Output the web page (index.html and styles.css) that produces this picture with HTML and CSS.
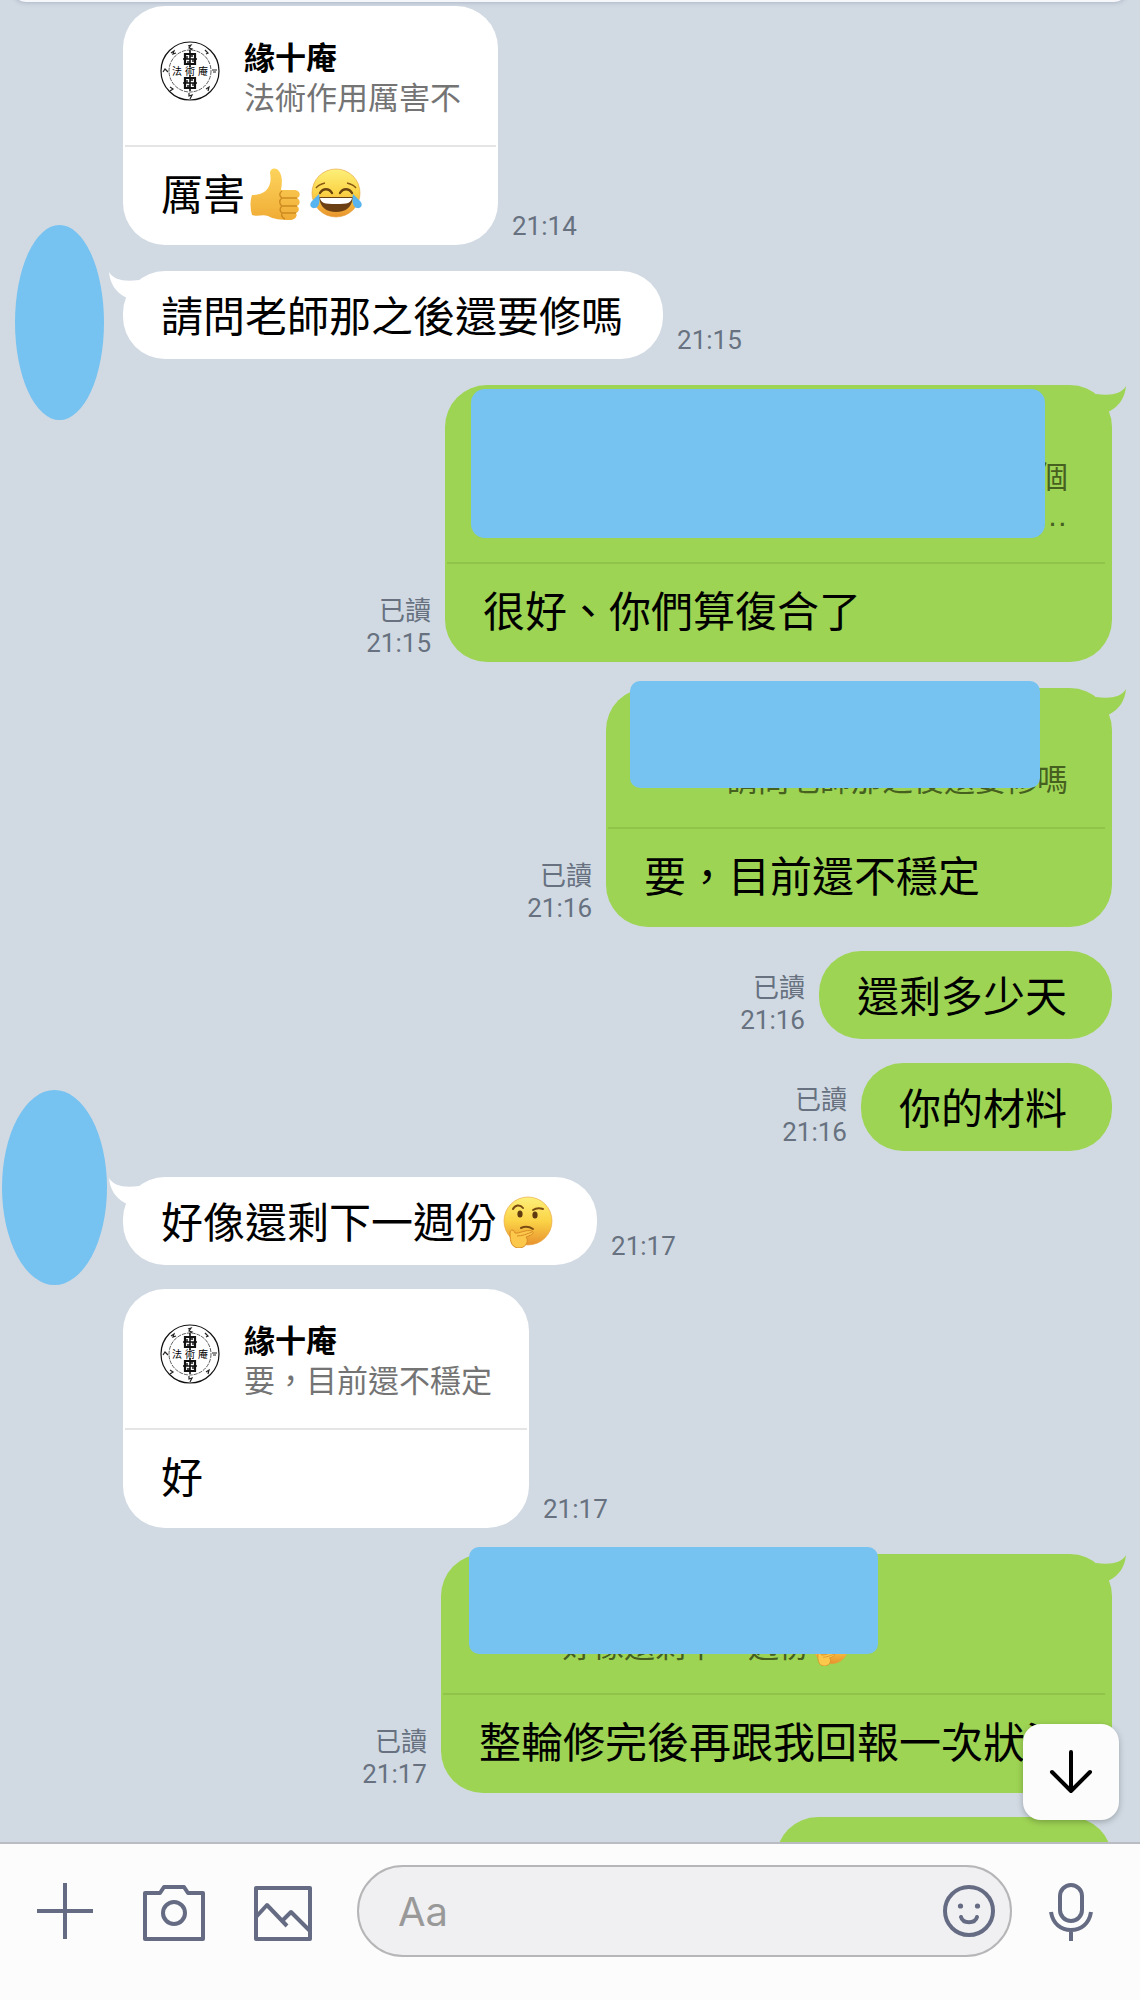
FILE: index.html
```html
<!DOCTYPE html>
<html lang="zh-Hant">
<head>
  <meta charset="UTF-8">
  <meta name="viewport" content="width=device-width, initial-scale=1.0">
  <title>緣十庵</title>
  <link rel="stylesheet" href="styles.css">
</head>
<body>
  <!-- shared drawings -->
  <svg class="defs" aria-hidden="true">
    <defs>
      <linearGradient id="face" x1="0" y1="0" x2="0" y2="1">
        <stop offset="0" stop-color="#fdf07a"/>
        <stop offset="0.5" stop-color="#fbd347"/>
        <stop offset="1" stop-color="#e8922e"/>
      </linearGradient>
      <linearGradient id="hand" x1="0" y1="0" x2="0" y2="1">
        <stop offset="0" stop-color="#fdd45c"/>
        <stop offset="1" stop-color="#f0ac35"/>
      </linearGradient>
    </defs>

    <symbol id="thumb" viewBox="0 0 52 52">
      <path d="M2 27C9 27 15 25 18 20C21 15 21 10 20 5C20 0 26-1 29 3C33 9 32 16 31 22H44C51 22 51 29 47 30C51 32 50 37 47 38C50 40 49 44 46 45C48 48 45 52 40 52C31 52 23 51 18 48C12 46 8 49 2 47C0 40 0 33 2 27Z" fill="url(#hand)"/>
      <path d="M32 30H47M32 38H47M32 45H46M32 23C29 25 29 28 32 30C29 32 29 36 32 38C29 40 30 44 32 45C31 47 32 50 35 51" fill="none" stroke="#cd8a21" stroke-width="1.4"/>
    </symbol>

    <symbol id="joy" viewBox="0 0 52 52">
      <circle cx="26" cy="25" r="24" fill="url(#face)" stroke="#e5a03a" stroke-width="0.6"/>
      <path d="M6 20C8 17 11 16 15 15M46 20C44 17 41 16 37 15" fill="none" stroke="#8a5a14" stroke-width="1.4"/>
      <path d="M10 25C13 20 19 20 22 25M30 25C33 20 39 20 42 25" fill="none" stroke="#6b4410" stroke-width="2.4" stroke-linecap="round"/>
      <path d="M9 29H43C42 39 36 44 26 44S10 39 9 29Z" fill="#6b3f12"/>
      <path d="M10 30H42C41 35 38 36 26 36S11 35 10 30Z" fill="#fff"/>
      <path d="M9 26C10 31 10 39 5 40C0 41-1 36 2 33Z" fill="#58b4ee"/>
      <path d="M43 26C42 31 42 39 47 40C52 41 53 36 50 33Z" fill="#58b4ee"/>
    </symbol>

    <symbol id="thinking" viewBox="0 0 52 52">
      <circle cx="26" cy="25" r="24" fill="url(#face)" stroke="#e5a03a" stroke-width="0.6"/>
      <path d="M11 13C13 9 18 8 21 12M31 14C34 12 38 12 41 13" fill="none" stroke="#7a4c12" stroke-width="2" stroke-linecap="round"/>
      <ellipse cx="18" cy="18" rx="2.6" ry="3.6" fill="#5f3a10"/>
      <ellipse cx="33" cy="19" rx="2.6" ry="3.6" fill="#5f3a10"/>
      <path d="M19 32C23 30 28 31 31 33" fill="none" stroke="#7a4c12" stroke-width="2" stroke-linecap="round"/>
      <path d="M8 37C8 33 12 33 13 37C17 38 24 33 30 35C33 37 30 39 24 41C27 44 25 51 18 52C10 52 8 47 8 37Z" fill="#fcc84c" stroke="#d98b25" stroke-width="1"/>
      <path d="M15 40C20 40 25 38 30 36" fill="none" stroke="#d98b25" stroke-width="1"/>
    </symbol>

    <!-- ring, crosses and marks of the seal -->
    <symbol id="seal" viewBox="0 0 60 60">
      <circle cx="30" cy="30" r="29" fill="#fff" stroke="#111" stroke-width="1.2"/>
      <circle cx="30" cy="30" r="21" fill="none" stroke="#333" stroke-width="0.8" stroke-dasharray="4 1"/>
      <g id="cross" fill="none" stroke="#111">
        <path d="M25 13H35V23H25Z" stroke-width="2.2"/>
        <path d="M30 10V26M23 18H37" stroke-width="1.6"/>
        <path d="M27 15V18M33 18V21M27 21H30M30 15H33" stroke-width="1.4"/>
      </g>
      <use href="#cross" y="24"/>
      <path d="M28 5L31 4L29 7L32 8L29 10M11 12L14 10L13 13L16 12M45 9L48 12L46 13M3 31L5 28L8 31M52 29H57M53 31H56M10 46L13 48L10 50M46 48L49 46L48 50M29 52V55L32 54L30 58" fill="none" stroke="#222" stroke-width="1.2"/>
    </symbol>

    <symbol id="tail" viewBox="0 0 32 30">
      <path d="M0 0C5 8 15 10 30 8V30L16 25C7 20 1 12 0 0Z" fill="currentColor"/>
    </symbol>
  </svg>

  <main class="chat">
    <div class="notice"></div>

    <div class="row">
      <div class="bubble">
        <div class="quote">
          <svg class="seal" viewBox="0 0 60 60">
            <use href="#seal"/>
            <text x="17" y="34">法</text>
            <text x="30" y="34">術</text>
            <text x="43" y="34">庵</text>
          </svg>
          <div class="quote-text">
            <div class="name">緣十庵</div>
            <div class="sub">法術作用厲害不</div>
          </div>
        </div>
        <div class="text">厲害<svg class="emoji" role="img" aria-label="👍"><use href="#thumb"/></svg><svg class="emoji" role="img" aria-label="😂"><use href="#joy"/></svg></div>
      </div>
      <div class="meta">21:14</div>
    </div>

    <div class="row first">
      <div class="avatar"></div>
      <div class="bubble">
        <svg class="tail"><use href="#tail"/></svg>
        <div class="text">請問老師那之後還要修嗎</div>
      </div>
      <div class="meta">21:15</div>
    </div>

    <div class="row mine first">
      <div class="bubble wide">
        <svg class="tail"><use href="#tail"/></svg>
        <div class="quote">
          <div class="quote-text">
            <div class="name"></div>
            <div class="sub">個<br><span class="dots">…</span></div>
          </div>
          <div class="cover cover-large"></div>
        </div>
        <div class="text">很好、你們算復合了</div>
      </div>
      <div class="meta">已讀<br>21:15</div>
    </div>

    <div class="row mine first">
      <div class="bubble">
        <svg class="tail"><use href="#tail"/></svg>
        <div class="quote">
          <div class="seal"></div>
          <div class="quote-text">
            <div class="name"></div>
            <div class="sub">請問老師那之後還要修嗎</div>
          </div>
          <div class="cover"></div>
        </div>
        <div class="text">要，目前還不穩定</div>
      </div>
      <div class="meta">已讀<br>21:16</div>
    </div>

    <div class="row mine">
      <div class="bubble">
        <div class="text">還剩多少天</div>
      </div>
      <div class="meta">已讀<br>21:16</div>
    </div>

    <div class="row mine">
      <div class="bubble">
        <div class="text">你的材料</div>
      </div>
      <div class="meta">已讀<br>21:16</div>
    </div>

    <div class="row first">
      <div class="avatar avatar-wide"></div>
      <div class="bubble">
        <svg class="tail"><use href="#tail"/></svg>
        <div class="text">好像還剩下一週份<svg class="emoji" role="img" aria-label="🤔"><use href="#thinking"/></svg></div>
      </div>
      <div class="meta">21:17</div>
    </div>

    <div class="row">
      <div class="bubble">
        <div class="quote">
          <svg class="seal" viewBox="0 0 60 60">
            <use href="#seal"/>
            <text x="17" y="34">法</text>
            <text x="30" y="34">術</text>
            <text x="43" y="34">庵</text>
          </svg>
          <div class="quote-text">
            <div class="name">緣十庵</div>
            <div class="sub">要，目前還不穩定</div>
          </div>
        </div>
        <div class="text">好</div>
      </div>
      <div class="meta">21:17</div>
    </div>

    <div class="row mine first">
      <div class="bubble">
        <svg class="tail"><use href="#tail"/></svg>
        <div class="quote">
          <div class="seal"></div>
          <div class="quote-text">
            <div class="name"></div>
            <div class="sub">好像還剩下一週份<svg class="emoji small" role="img" aria-label="🤔"><use href="#thinking"/></svg></div>
          </div>
          <div class="cover cover-left"></div>
        </div>
        <div class="text">整輪修完後再跟我回報一次狀況</div>
      </div>
      <div class="meta">已讀<br>21:17</div>
    </div>

    <div class="row mine">
      <div class="bubble half">
        <div class="text"></div>
      </div>
      <div class="meta">已讀</div>
    </div>

    <button class="scroll-down" type="button" aria-label="捲到最新訊息">
      <svg width="48" height="48" viewBox="0 0 48 48" fill="none" stroke="#000" stroke-width="4" stroke-linecap="round" stroke-linejoin="round">
        <path d="M24 4V43M5 24L24 43L43 24"/>
      </svg>
    </button>
  </main>

  <form class="composer">
    <div class="tools">
      <button class="tool" type="button" aria-label="更多">
        <svg viewBox="0 0 64 64"><path d="M32 4V60M4 32H60"/></svg>
      </button>
      <button class="tool" type="button" aria-label="相機">
        <svg viewBox="0 0 64 64"><path d="M3 14H18L22 8H42L46 14H61V60H3Z"/><circle cx="32" cy="34" r="11"/></svg>
      </button>
      <button class="tool" type="button" aria-label="照片">
        <svg viewBox="0 0 64 64"><path d="M5 9H59V60H5Z"/><path d="M5 38L16 26L36 47M31 42L40 33L59 52"/></svg>
      </button>
    </div>
    <div class="field">
      <input class="input" type="text" placeholder="Aa" aria-label="輸入訊息">
      <button class="smile" type="button" aria-label="貼圖">
        <svg viewBox="0 0 52 52"><circle cx="26" cy="26" r="24"/><path d="M18 32C20 39 32 39 34 32" stroke-linecap="round"/><circle class="dot" cx="17.500" cy="21" r="2.600"/><circle class="dot" cx="34.500" cy="21" r="2.600"/></svg>
      </button>
    </div>
    <button class="mic" type="button" aria-label="語音訊息">
      <svg viewBox="0 0 44 60"><rect x="11" y="4" width="22" height="36" rx="11"/><path d="M2 31C4 43 12 49 22 49S40 43 42 31M22 49V60"/></svg>
    </button>
  </form>
</body>
</html>
```
FILE: styles.css
```css
* {
  box-sizing: border-box;
}

body {
  margin: 0;
  height: 100vh;
  display: flex;
  flex-direction: column;
  font-family: Roboto, "Noto Sans CJK TC", sans-serif;
  background: #d1dae3;
  color: #000;
}

button {
  padding: 0;
  border: none;
  background: none;
  cursor: pointer;
}

.defs {
  position: absolute;
  width: 0;
  height: 0;
}

/* Messages */
.chat {
  position: relative;
  flex: 1;
  min-height: 0;
  overflow: hidden;
  display: flex;
  flex-direction: column;
  gap: 24px;
  padding: 6px 28px 0 123px;
}

/* bottom edge of the notice bar */
.notice {
  position: absolute;
  top: -40px;
  left: 12px;
  right: 12px;
  height: 42px;
  border-radius: 14px;
  background: #f6f7fa;
  box-shadow: 0 1px 4px rgba(90, 100, 130, 0.3);
}

.row {
  position: relative;
  display: flex;
  flex-shrink: 0;
  align-items: flex-end;
  gap: 14px;
}

.row.first {
  margin-top: 2px;
}

.mine {
  flex-direction: row-reverse;
}

.bubble {
  position: relative;
  border-radius: 42px;
  background: #fff;
}

.mine .bubble {
  background: #9ed454;
}

.bubble.wide {
  width: calc(100% - 322px);
}

.bubble.half {
  width: 34%;
}

.tail {
  position: absolute;
  top: 1px;
  left: -14px;
  width: 32px;
  height: 30px;
  color: #fff;
}

.mine .tail {
  left: auto;
  right: -14px;
  color: #9ed454;
  transform: scaleX(-1);
}

.text {
  min-height: 88px;
  padding: 17px 40px 11px 38px;
  font-size: 42px;
  line-height: 60px;
  white-space: nowrap;
}

.mine .text {
  padding-right: 45px;
}

.quote + .text {
  padding-top: 19px;
  padding-bottom: 19px;
}

.quote {
  position: relative;
  display: flex;
  gap: 24px;
  margin: 0 2px;
  padding: 33px 35px 27px 35px;
  border-bottom: 2px solid #e5e5e5;
  font-size: 31px;
}

.mine .quote {
  margin-right: 7px;
  padding-right: 37px;
  border-color: #8fc34a;
}

.seal {
  width: 60px;
  height: 60px;
  margin-top: 2px;
  font-size: 10px;
  text-anchor: middle;
}

.name {
  height: 41px;
  line-height: 40px;
  font-weight: bold;
}

.sub {
  line-height: 38px;
  color: #747474;
  white-space: nowrap;
}

.mine .sub {
  color: #46601f;
}

.dots {
  font-family: "Liberation Sans", sans-serif;
}

.wide .quote-text {
  flex: 1;
  text-align: right;
}

.emoji {
  width: 52px;
  height: 52px;
  margin: 0 3px 0 5px;
  vertical-align: -10px;
}

.emoji.small {
  width: 38px;
  height: 38px;
  margin: 0 2px;
  vertical-align: -9px;
}

.meta {
  padding-bottom: 3px;
  font-size: 26px;
  line-height: 32px;
  color: #67717f;
  white-space: nowrap;
}

/* keeps the read mark above the line of the time */
.half + .meta {
  padding-bottom: 33px;
}

.mine .meta {
  text-align: right;
}

/* Covered names and photos */
.avatar {
  position: absolute;
  left: -108px;
  top: -46px;
  width: 89px;
  height: 195px;
  border-radius: 50%;
  background: #76c2f0;
}

.avatar-wide {
  left: -121px;
  top: -87px;
  width: 105px;
}

.cover {
  position: absolute;
  top: -7px;
  left: 22px;
  right: 65px;
  height: 107px;
  border-radius: 10px;
  background: #76c2f0;
}

.cover-large {
  top: 4px;
  left: 24px;
  right: 60px;
  height: 149px;
  border-radius: 14px;
}

.cover-left {
  left: 26px;
  right: 227px;
}

.scroll-down {
  position: absolute;
  right: 21px;
  bottom: 22px;
  width: 96px;
  height: 96px;
  display: flex;
  align-items: center;
  justify-content: center;
  border-radius: 18px;
  background: #fcfcfd;
  box-shadow: 0 2px 6px rgba(0, 0, 0, 0.25);
}

/* Input bar */
.composer {
  display: flex;
  align-items: center;
  padding: 21px 47px 43px 33px;
  border-top: 2px solid #babcc4;
  background: #fcfcfc;
}

.composer svg {
  display: block;
  width: 100%;
  height: 100%;
  fill: none;
  stroke: #646b83;
  stroke-width: 4px;
  stroke-linejoin: round;
}

.composer .dot {
  fill: #646b83;
  stroke: none;
}

.tools {
  display: flex;
  gap: 45px;
  margin-right: 42px;
}

.tool {
  width: 64px;
  height: 64px;
}

.field {
  flex: 1;
  min-width: 0;
  display: flex;
  align-items: center;
  height: 92px;
  padding: 0 15px 0 39px;
  border: 2px solid #b6b6b8;
  border-radius: 46px;
  background: #f0f0f2;
}

.input {
  flex: 1;
  min-width: 0;
  padding: 0;
  border: none;
  outline: none;
  background: none;
  font-family: Inter, sans-serif;
  font-size: 40px;
  color: #000;
}

.input::placeholder {
  color: #999;
  opacity: 1;
}

.smile {
  width: 52px;
  height: 52px;
}

.mic {
  width: 44px;
  height: 60px;
  margin-left: 37px;
}
```
